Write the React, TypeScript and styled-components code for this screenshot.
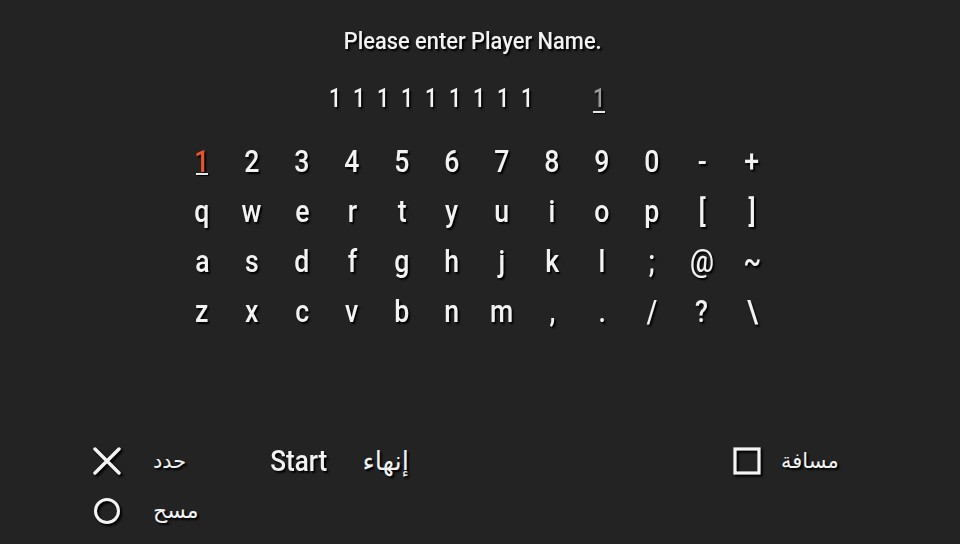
import React from "react";
import styled, { createGlobalStyle } from "styled-components";

const GlobalStyle = createGlobalStyle`
  html, body {
    margin: 0;
    padding: 0;
    background: #232323;
  }
`;

const KEYS = [
  ["1", "2", "3", "4", "5", "6", "7", "8", "9", "0", "-", "+"],
  ["q", "w", "e", "r", "t", "y", "u", "i", "o", "p", "[", "]"],
  ["a", "s", "d", "f", "g", "h", "j", "k", "l", ";", "@", "~"],
  ["z", "x", "c", "v", "b", "n", "m", ",", ".", "/", "?", "\\"],
];

const NAME = ["1", "1", "1", "1", "1", "1", "1", "1", "1", "", ""];

const Screen = styled.div`
  width: 960px;
  height: 544px;
  display: flex;
  flex-direction: column;
  font-family: Roboto, "DejaVu Sans", sans-serif;
  font-weight: 500;
  color: #f2f2f2;
  text-shadow: 2px 2px 2px #000;
  overflow: hidden;
`;

const Condensed = styled.span<{ $scale?: number }>`
  display: inline-block;
  transform: scaleX(${(p) => p.$scale ?? 0.86});
`;

const Title = styled.div`
  margin-top: 25px;
  padding-right: 14px;
  text-align: center;
  font-size: 24px;
  line-height: 32px;
`;

const NameRow = styled.div`
  display: flex;
  margin-top: 25px;
  padding-left: 323px;
  height: 34px;
`;

const NameCell = styled.div<{ $cursor?: boolean }>`
  width: 24px;
  text-align: center;
  font-size: 25px;
  line-height: 34px;
  color: ${(p) => (p.$cursor ? "#9a9a9a" : "#f2f2f2")};
  position: relative;
  ${(p) =>
    p.$cursor &&
    `
    &::after {
      content: "";
      position: absolute;
      left: 6px;
      right: 6px;
      bottom: 3px;
      height: 2px;
      background: #e6e6e6;
      box-shadow: 1px 1px 1px #000;
    }
  `}
`;

const Keyboard = styled.div`
  display: grid;
  grid-template-columns: repeat(12, 50px);
  grid-auto-rows: 50px;
  margin-top: 21px;
  margin-left: 177px;
`;

const Key = styled.div<{ $active?: boolean }>`
  display: flex;
  align-items: center;
  justify-content: center;
  font-size: 31px;
  line-height: 50px;
  color: ${(p) => (p.$active ? "#e8552c" : "#f2f2f2")};
  position: relative;
  ${(p) =>
    p.$active &&
    `
    &::after {
      content: "";
      position: absolute;
      left: 19px;
      width: 12px;
      top: 36px;
      height: 2px;
      background: #e9e9e9;
      box-shadow: 1px 1px 1px #000;
    }
  `}
`;

const Footer = styled.div`
  margin-top: auto;
  padding: 0 0 19px 93px;
  display: flex;
  flex-direction: column;
  gap: 22px;
`;

const FooterRow = styled.div`
  display: flex;
  align-items: center;
  height: 28px;
`;

const Item = styled.div<{ $gap: number; $width?: number }>`
  display: flex;
  align-items: center;
  gap: ${(p) => p.$gap}px;
  width: ${(p) => (p.$width ? `${p.$width}px` : "auto")};
`;

const Label = styled.span<{ $size?: number }>`
  font-size: ${(p) => p.$size ?? 22}px;
  line-height: 28px;
  font-weight: 400;
  font-family: "DejaVu Sans", sans-serif;
`;

const StartText = styled.span`
  font-size: 29px;
  line-height: 28px;
`;

const Icon = styled.svg`
  width: 28px;
  height: 28px;
  flex: none;
  filter: drop-shadow(2px 2px 1px #000);
`;

const CrossIcon = () => (
  <Icon viewBox="0 0 28 28">
    <path d="M2 2 L26 26 M26 2 L2 26" stroke="#f4f4f4" strokeWidth="3.4" strokeLinecap="round" />
  </Icon>
);

const CircleIcon = () => (
  <Icon viewBox="0 0 28 28">
    <circle cx="14" cy="14" r="11.5" fill="none" stroke="#f4f4f4" strokeWidth="3" />
  </Icon>
);

const SquareIcon = () => (
  <Icon viewBox="0 0 28 28">
    <rect x="2" y="2" width="24" height="24" fill="none" stroke="#f4f4f4" strokeWidth="3.2" />
  </Icon>
);

export default function App() {
  return (
    <>
      <GlobalStyle />
      <Screen>
        <Title>
          <Condensed $scale={0.91}>Please enter Player Name.</Condensed>
        </Title>
        <NameRow>
          {NAME.map((c, i) => (
            <NameCell key={i}>
              <Condensed>{c}</Condensed>
            </NameCell>
          ))}
          <NameCell $cursor>
            <Condensed>1</Condensed>
          </NameCell>
        </NameRow>
        <Keyboard>
          {KEYS.flat().map((k, i) => (
            <Key key={i} $active={i === 0}>
              <Condensed>{k}</Condensed>
            </Key>
          ))}
        </Keyboard>
        <Footer>
          <FooterRow>
            <Item $gap={32} $width={174}>
              <CrossIcon />
              <Label $size={21}>حدد</Label>
            </Item>
            <Item $gap={32} $width={466}>
              <StartText>
                <Condensed $scale={0.9}>Start</Condensed>
              </StartText>
              <Label $size={26}>إنهاء</Label>
            </Item>
            <Item $gap={20}>
              <SquareIcon />
              <Label $size={21}>مسافة</Label>
            </Item>
          </FooterRow>
          <FooterRow>
            <Item $gap={32}>
              <CircleIcon />
              <Label $size={22}>مسح</Label>
            </Item>
          </FooterRow>
        </Footer>
      </Screen>
    </>
  );
}
